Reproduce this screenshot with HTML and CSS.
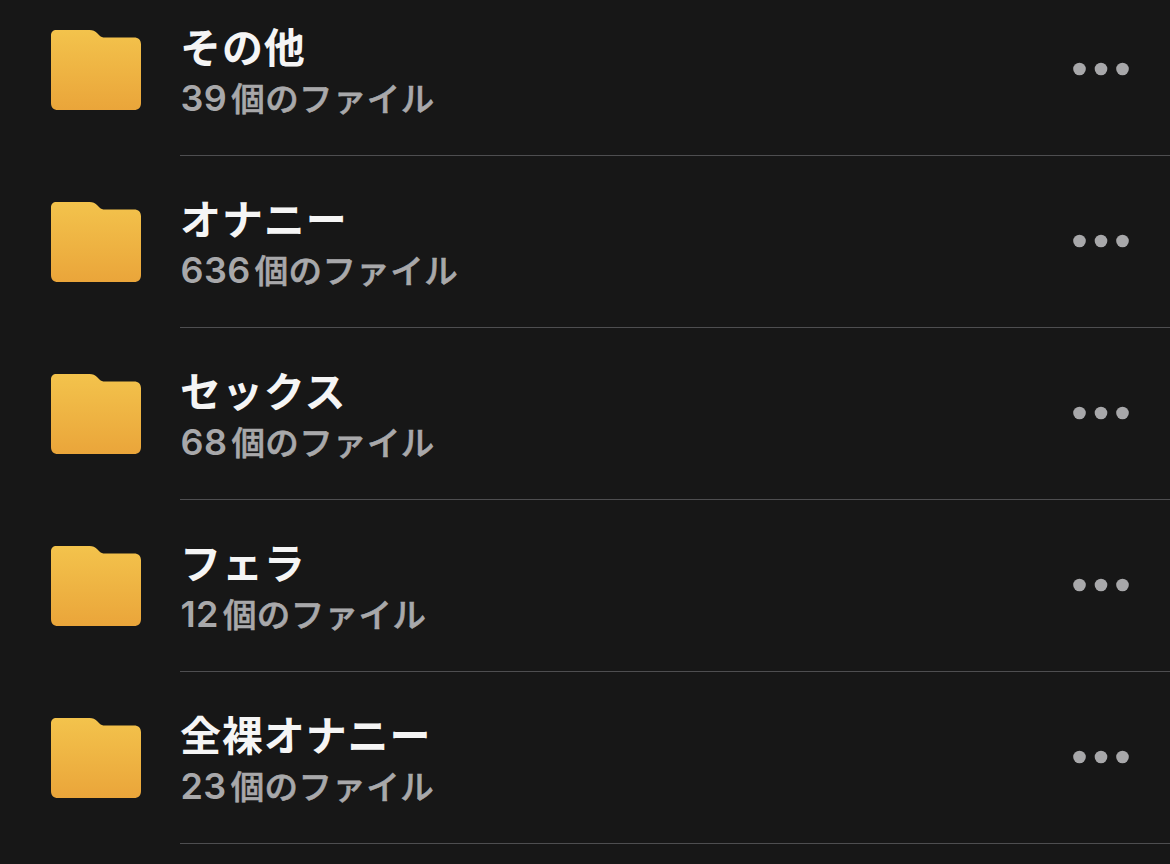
FILE: index.html
```html
<!DOCTYPE html>
<html lang="ja">
<head>
<meta charset="utf-8">
<title>フォルダ</title>
<link rel="stylesheet" href="styles.css">
</head>
<body>
<svg class="defs" width="0" height="0" aria-hidden="true">
  <defs>
    <linearGradient id="folder-fill" x1="0" y1="0" x2="0" y2="1">
      <stop offset="0" stop-color="#f3c34c"/>
      <stop offset="1" stop-color="#eaa53a"/>
    </linearGradient>
    <symbol id="folder" viewBox="0 0 90 80">
      <path fill="url(#folder-fill)" d="M5.500 0H38.500C42 0 44 1 46 3L48.500 5.500C50 7 51.500 7.500 54 7.500H83C87.500 7.500 90 10 90 14.500V73C90 77.500 87.500 80 83 80H7C2.500 80 0 77.500 0 73V5.500C0 2 2 0 5.500 0Z"/>
    </symbol>
    <symbol id="more" viewBox="0 0 56 14">
      <circle cx="6.500" cy="7" r="6.300"/><circle cx="28" cy="7" r="6.300"/><circle cx="49.500" cy="7" r="6.300"/>
    </symbol>
  </defs>
</svg>
<main class="list">
  <div class="row"><svg class="folder"><use href="#folder"/></svg><div class="body"><div class="text"><div class="name">その他</div><div class="count"><span class="num">39</span>個のファイル</div></div><svg class="more"><use href="#more"/></svg></div></div>
  <div class="row"><svg class="folder"><use href="#folder"/></svg><div class="body"><div class="text"><div class="name">オナニー</div><div class="count"><span class="num">636</span>個のファイル</div></div><svg class="more"><use href="#more"/></svg></div></div>
  <div class="row"><svg class="folder"><use href="#folder"/></svg><div class="body"><div class="text"><div class="name">セックス</div><div class="count"><span class="num">68</span>個のファイル</div></div><svg class="more"><use href="#more"/></svg></div></div>
  <div class="row"><svg class="folder"><use href="#folder"/></svg><div class="body"><div class="text"><div class="name">フェラ</div><div class="count"><span class="num">12</span>個のファイル</div></div><svg class="more"><use href="#more"/></svg></div></div>
  <div class="row"><svg class="folder"><use href="#folder"/></svg><div class="body"><div class="text"><div class="name">全裸オナニー</div><div class="count"><span class="num">23</span>個のファイル</div></div><svg class="more"><use href="#more"/></svg></div></div>
</main>
</body>
</html>
```
FILE: styles.css
```css
* { box-sizing: border-box; }
body {
  margin: 0;
  height: 864px;
  overflow: hidden;
  background: #171717;
  font-family: Inter, "Noto Sans CJK JP", sans-serif;
}
.defs { display: block; height: 0; }
.list { margin-top: -16px; }
.row {
  display: flex;
  height: 172px;
  padding-left: 51px;
}
.folder {
  flex: none;
  width: 90px;
  height: 80px;
  margin: 46px 39px 0 0;
}
.body {
  flex: 1;
  display: flex;
  justify-content: space-between;
  border-bottom: 1px solid #4e4e50;
  padding-right: 41px;
}
.text { padding-top: 33px; white-space: nowrap; }
.name {
  height: 58px;
  line-height: 56px;
  font-family: "Noto Sans CJK JP", sans-serif;
  font-size: 41px;
  font-weight: 700;
  letter-spacing: 0.9px;
  color: #f5f5f5;
}
.count {
  height: 46px;
  padding-left: 0.5px;
  line-height: 46px;
  font-size: 33.5px;
  font-weight: 500;
  letter-spacing: 0.4px;
  color: #a8a8aa;
  -webkit-text-stroke: 0.6px #a8a8aa;
}
.num {
  margin-right: 4px;
  font-size: 36px;
  font-weight: 600;
  -webkit-text-stroke: 0;
}
.more {
  width: 56px;
  height: 14px;
  margin-top: 78px;
  fill: #a8a8aa;
}
```
